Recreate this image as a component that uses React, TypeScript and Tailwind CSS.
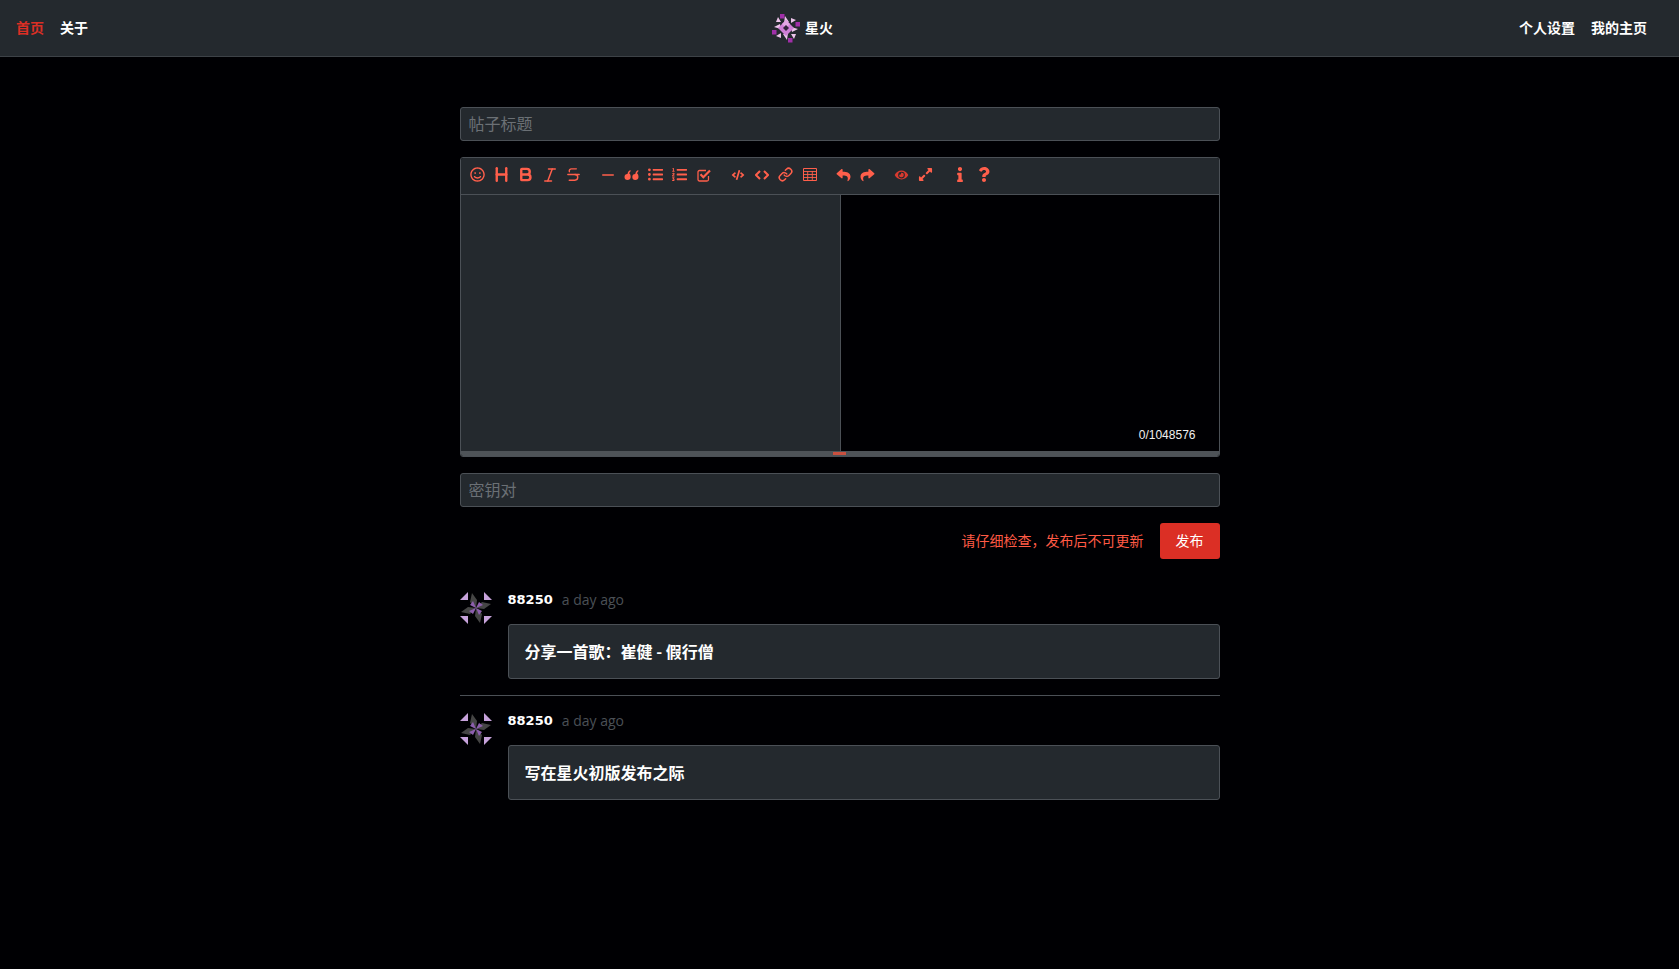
import { Bold, Heading, Italic, Link, Minus, Strikethrough } from "lucide-react";
import {
  FaRegSmile,
  FaListUl,
  FaListOl,
  FaCode,
  FaReply,
  FaShare,
  FaEye,
  FaExpandAlt,
  FaInfo,
  FaQuestion,
} from "react-icons/fa";
import type { ReactNode } from "react";

const sans = "font-['Noto_Sans_CJK_SC','Noto_Sans',sans-serif]";

function Logo() {
  return (
    <svg viewBox="0 0 30 30" className="h-[30px] w-[30px]" aria-hidden="true">
      <g fill="#a02fa8">
        <rect x="9" y="1" width="4.5" height="4.5" />
        <rect x="24.5" y="9" width="4.5" height="4.5" />
        <rect x="1" y="17" width="4.5" height="4.5" />
        <rect x="17" y="25" width="4.5" height="4.5" />
      </g>
      <g fill="#ecc4ea">
        <polygon points="14,3 18,9 13,10" />
        <polygon points="20,5 25,7 20,10" />
        <polygon points="27,16 21,19 20,14" />
        <polygon points="25,21 23,26 20,21" />
        <polygon points="16,27 12,21 17,20" />
        <polygon points="10,25 5,23 10,20" />
        <polygon points="3,14 9,11 10,16" />
        <polygon points="5,9 7,4 10,9" />
      </g>
      <polygon points="15,7 23,15 15,23 7,15" fill="#cf7fd6" />
      <polygon points="15,7 19,11 15,15 11,11" fill="#e3a6e4" />
      <polygon points="15,12 18,15 15,18 12,15" fill="#30243a" />
    </svg>
  );
}

function Avatar() {
  return (
    <svg viewBox="0 0 32 32" className="h-8 w-8 shrink-0" aria-hidden="true">
      <g fill="#c7a3dc">
        <polygon points="8,0 8,8 0,8" />
        <polygon points="24,0 32,8 24,8" />
        <polygon points="0,24 8,24 8,32" />
        <polygon points="32,24 24,24 24,32" />
      </g>
      <g fill="#454545">
        <polygon points="12,1 17,8 16,16 10,10" />
        <polygon points="31,12 24,17 16,16 22,10" />
        <polygon points="20,31 15,24 16,16 22,22" />
        <polygon points="1,20 8,15 16,16 10,22" />
      </g>
      <g fill="#8d5fae">
        <polygon points="13,9 16,16 10,13" />
        <polygon points="23,13 16,16 19,10" />
        <polygon points="19,23 16,16 22,19" />
        <polygon points="9,19 16,16 13,22" />
      </g>
    </svg>
  );
}

const toolbar: ReactNode[][] = [
  [
    <FaRegSmile className="h-[15px] w-[15px]" />,
    <Heading className="h-[19px] w-[19px]" strokeWidth={3} />,
    <Bold className="h-[17px] w-[17px]" strokeWidth={3.4} />,
    <Italic className="h-[18px] w-[18px]" strokeWidth={2} />,
    <Strikethrough className="h-[17px] w-[17px]" strokeWidth={2} />,
  ],
  [
    <Minus className="h-[18px] w-[18px]" strokeWidth={2} />,
    <svg viewBox="0 0 14 11" className="h-[11px] w-[15px]" fill="currentColor" aria-hidden="true">
      <path d="M3 11A3 3 0 0 1 3 5C3 3.500 4 2 6 1L6 2.500C5 3 4.800 4 5 4.800C5.900 5.300 6.200 6.500 6.200 8C6.200 9.700 4.800 11 3 11Z" />
      <path d="M10.800 11A3 3 0 0 1 10.800 5C10.800 3.500 11.800 2 13.800 1L13.800 2.500C12.800 3 12.600 4 12.800 4.800C13.700 5.300 14 6.500 14 8C14 9.700 12.600 11 10.800 11Z" />
    </svg>,
    <FaListUl className="h-[15px] w-[15px]" />,
    <FaListOl className="h-[15px] w-[15px]" />,
    <svg viewBox="0 0 14 14" className="h-[14px] w-[14px]" fill="none" stroke="currentColor" aria-hidden="true">
      <path d="M11.500 8V11.500A1.500 1.500 0 0 1 10 13H2.500A1.500 1.500 0 0 1 1 11.500V4A1.500 1.500 0 0 1 2.500 2.500H9" strokeWidth="1.300" />
      <path d="M3.500 6.300L6.300 9.200L13 2.500" strokeWidth="2.200" />
    </svg>,
  ],
  [
    <FaCode className="h-[10px] w-[14px]" />,
    <svg viewBox="0 0 14 10" className="h-[10px] w-[14px]" fill="none" stroke="currentColor" strokeWidth="2" aria-hidden="true">
      <path d="M5 1L1 5L5 9M9 1L13 5L9 9" />
    </svg>,
    <Link className="h-[15px] w-[15px]" strokeWidth={2.4} />,
    <svg viewBox="0 0 14 13" className="h-[13px] w-[14px]" fill="none" stroke="currentColor" aria-hidden="true">
      <path d="M.5 .5H13.500V12.500H.5Z" strokeWidth="1" />
      <path d="M0 3.500H14M0 6.500H14M0 9.500H14M4.700 3V13M9.300 3V13" strokeWidth=".9" />
    </svg>,
  ],
  [<FaReply className="h-[14px] w-[15px]" />, <FaShare className="h-[14px] w-[15px]" />],
  [
    <FaEye className="h-[12px] w-[15px] text-[#d93a2f]" />,
    <FaExpandAlt className="h-[15px] w-[15px]" />,
  ],
  [<FaInfo className="h-[15px] w-[14px]" />, <FaQuestion className="h-[15px] w-[14px]" />],
];

function Toolbar() {
  return (
    <div className="flex h-[37px] items-center gap-[10px] border-b border-[#4b5056] bg-[#24292e] pb-[3px] pl-[5px]">
      {toolbar.map((group, i) => (
        <div key={i} className="flex">
          {group.map((icon, j) => (
            <span key={j} className="flex h-[24px] w-[24px] items-center justify-center text-[#ff5f4b]">
              {icon}
            </span>
          ))}
        </div>
      ))}
    </div>
  );
}

function Post({ title }: { title: string }) {
  return (
    <div className="flex gap-4">
      <Avatar />
      <div className="min-w-0 flex-1">
        <div className="flex h-[16px] items-center gap-[9px]">
          <span className="font-['DejaVu_Sans'] text-[13px] font-bold text-white">88250</span>
          <span className="pb-[2px] font-['Open_Sans',sans-serif] text-[14px] text-[#4b5056]">a day ago</span>
        </div>
        <div className="mt-[16px] flex h-[55px] items-center rounded-[3px] border border-[#4b5056] bg-[#24292e] px-4">
          <span className={`${sans} pb-[1px] text-[16px] font-bold text-white`}>{title}</span>
        </div>
      </div>
    </div>
  );
}

export default function App() {
  return (
    <div className={`min-h-[969px] bg-[#000003] ${sans}`}>
      <header className="flex h-[57px] items-center justify-between border-b border-[#3d4247] bg-[#24292e] pl-4 pr-8 text-[14px] font-bold">
        <nav className="flex w-[240px] gap-4 pb-[2px]">
          <a className="text-[#db2f25]">首页</a>
          <a className="text-white">关于</a>
        </nav>
        <div className="flex items-center gap-[4px] text-white">
          <Logo />
          <span className="pb-[2px]">星火</span>
        </div>
        <nav className="flex w-[299px] justify-end gap-4 pb-[2px] text-white">
          <a>个人设置</a>
          <a>我的主页</a>
        </nav>
      </header>

      <main className="mx-auto w-[760px] pt-[50px]">
        <input
          placeholder="帖子标题"
          className={`block h-[34px] w-full rounded-[3px] border border-[#4b5056] bg-[#24292e] px-2 pb-[3px] text-[16px] text-white placeholder:text-[#6b7075] ${sans}`}
        />

        <div className="mt-4 overflow-hidden rounded-[3px] border border-[#4b5056]">
          <Toolbar />
          <div className="flex h-[256px]">
            <div className="w-[380px] border-r border-[#4b5056] bg-[#24292e]" />
            <div className="relative flex-1 bg-[#000003]">
              <span className="absolute right-[23px] bottom-[7px] font-['Liberation_Sans'] text-[12px] text-[#f0f0f0]">
                0/1048576
              </span>
            </div>
          </div>
          <div className="flex h-[5px] justify-center bg-[#4e5358] pt-[1px]">
            <span className="h-[3px] w-[13px] bg-[#c9503f]" />
          </div>
        </div>

        <input
          placeholder="密钥对"
          className={`mt-4 block h-[34px] w-full rounded-[3px] border border-[#4b5056] bg-[#24292e] px-2 pb-[3px] text-[16px] text-white placeholder:text-[#6b7075] ${sans}`}
        />

        <div className="mt-4 flex items-center justify-end gap-4">
          <span className="pb-[1px] text-[14px] text-[#ff5a45]">请仔细检查，发布后不可更新</span>
          <button className="h-9 w-[60px] rounded-[3px] bg-[#db2f25] pb-[1px] text-[14px] text-white">发布</button>
        </div>

        <div className="mt-[33px]">
          <Post title="分享一首歌：崔健 - 假行僧" />
          <div className="mt-[16px] mb-[17px] border-t border-[#4b5056]" />
          <Post title="写在星火初版发布之际" />
        </div>
      </main>
    </div>
  );
}
